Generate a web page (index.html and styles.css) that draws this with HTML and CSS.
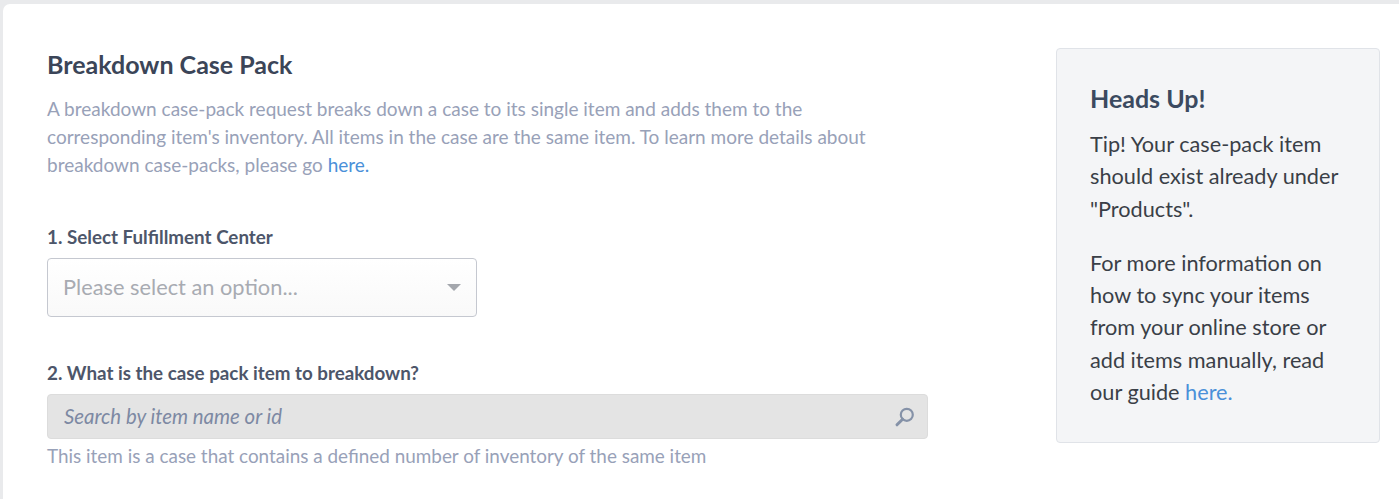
FILE: index.html
```html
<!DOCTYPE html>
<html lang="en">
<head>
    <meta charset="UTF-8">
    <meta name="viewport" content="width=device-width, initial-scale=1.0">
    <title>Breakdown Case Pack</title>
    <link rel="stylesheet" href="styles.css">
</head>
<body>
    <div class="card">
        <div class="form-container">
            <h2 class="title">Breakdown Case Pack</h2>
            <p class="intro">A breakdown case-pack request breaks down a case to its single item and adds them to the corresponding item's inventory. All items in the case are the same item. To learn more details about breakdown case-packs, please go <a href="#">here.</a></p>

            <div class="form-group first">
                <label for="center">1. Select Fulfillment Center</label>
                <div class="select" id="center">
                    <span>Please select an option...</span>
                    <span class="caret"></span>
                </div>
            </div>

            <div class="form-group second">
                <label for="item">2. What is the case pack item to breakdown?</label>
                <div class="search">
                    <input type="text" id="item" placeholder="Search by item name or id" disabled>
                    <svg class="search-icon" width="22" height="22" viewBox="0 0 22 22" fill="none" stroke="#8592a8">
                        <circle cx="12.8" cy="8.8" r="6" stroke-width="2.2"/>
                        <path d="M8.6 13.2L3 18.8" stroke-width="3" stroke-linecap="round"/>
                    </svg>
                </div>
                <div class="hint">This item is a case that contains a defined number of inventory of the same item</div>
            </div>
        </div>

        <div class="sidebar">
            <h3>Heads Up!</h3>
            <p>Tip! Your case-pack item should exist already under "Products".</p>
            <p>For more information on how to sync your items from your online store or add items manually, read our guide <a href="#">here.</a></p>
        </div>
    </div>
</body>
</html>
```

FILE: styles.css
```css
html, body {
    height: 100%;
}

body {
    font-family: "Lato", Arial, sans-serif;
    margin: 0;
    padding: 4px 0 0 3px;
    box-sizing: border-box;
    background-color: #e9eaec;
    overflow: hidden;
}

.card {
    display: flex;
    align-items: flex-start;
    box-sizing: border-box;
    height: 100%;
    padding: 44px 19px 0 44px;
    background-color: #ffffff;
    border-radius: 7px 0 0 0;
}

.form-container {
    width: 881px;
    margin-right: 128px;
}

.title {
    margin: 0;
    font-size: 25px;
    line-height: 32px;
    font-weight: 700;
    color: #3b4558;
}

.intro {
    width: 830px;
    margin: 15px 0 0;
    font-size: 19px;
    line-height: 28px;
    color: #98a1b8;
}

a {
    color: #4a90d9;
    text-decoration: none;
}

.form-group label {
    display: block;
    font-size: 18.8px;
    line-height: 22px;
    font-weight: 700;
    color: #4d566a;
}

.first {
    margin-top: 47px;
}

.second {
    margin-top: 45px;
}

.select {
    display: flex;
    justify-content: space-between;
    align-items: center;
    box-sizing: border-box;
    width: 430px;
    height: 59px;
    margin-top: 10px;
    padding: 0 15px 2px;
    border: 1px solid #c5c8d0;
    border-radius: 4px;
    background-image: linear-gradient(#ffffff, #f9f9f9);
    font-size: 21.8px;
    color: #a8abb2;
}

.caret {
    width: 0;
    height: 0;
    margin-top: 2px;
    border-left: 7px solid transparent;
    border-right: 7px solid transparent;
    border-top: 7px solid #a4a7ad;
}

.search {
    position: relative;
    margin-top: 10px;
}

.search input {
    display: block;
    box-sizing: border-box;
    width: 100%;
    height: 45px;
    padding: 0 16px 2px;
    border: 1px solid #dcdcdc;
    border-radius: 4px;
    background-color: #e4e4e4;
    font-family: inherit;
    font-size: 20.4px;
    font-style: italic;
}

.search input::placeholder {
    color: #7d89a3;
    opacity: 1;
}

.search-icon {
    position: absolute;
    right: 12px;
    top: 12px;
}

.hint {
    margin-top: 5px;
    font-size: 18.9px;
    line-height: 24px;
    color: #98a1b8;
}

.sidebar {
    box-sizing: border-box;
    width: 324px;
    height: 395px;
    padding: 32px 33px 0;
    background-color: #f4f5f7;
    border: 1px solid #e0e3e8;
    border-radius: 4px;
}

.sidebar h3 {
    margin: 0;
    font-size: 25px;
    line-height: 34px;
    font-weight: 700;
    color: #3b4a60;
}

.sidebar p {
    margin: 13px 0 0;
    font-size: 21.7px;
    line-height: 32.3px;
    color: #3a3f47;
}

.sidebar p + p {
    margin-top: 22px;
}
```
